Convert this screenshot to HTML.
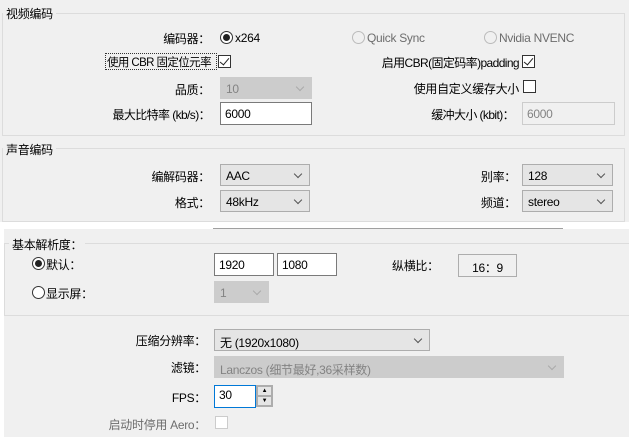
<!DOCTYPE html>
<html><head><meta charset="utf-8"><style>
*{margin:0;padding:0;box-sizing:border-box}
body{width:629px;height:448px;background:#fff;font-family:"Liberation Sans","Noto Sans CJK SC",sans-serif;font-size:12px;letter-spacing:-0.3px;color:#000;position:relative;overflow:hidden}
.a{position:absolute;white-space:nowrap}
.bg{position:absolute;background:#f0f0f0}
.grp{position:absolute;border:1px solid #dcdcdc}
.t{background:#f0f0f0;padding:0 3px}
.r{text-align:right}
.sel{position:absolute;border:1px solid #adadad;background:#e5e5e5;padding:4px 0 0 5px;height:22px}
.sel.d{border-color:#ccc;background:#cccccc;color:#838383}
.sel:after{content:"";position:absolute;right:8px;top:6px;width:5px;height:5px;border-right:1px solid #555;border-bottom:1px solid #555;transform:rotate(45deg)}
.sel.d:after{border-color:#aaa}
.inp{position:absolute;border:1px solid #7a7a7a;background:#fff;padding:4px 0 0 4px;height:23px}
.inp.d{border-color:#ccc;background:#f0f0f0;color:#838383}
.rad{position:absolute;width:13px;height:13px;border:1px solid #333;border-radius:50%;background:#fff}
.rad.on:after{content:"";position:absolute;left:2px;top:2px;width:7px;height:7px;border-radius:50%;background:#222}
.rad.d{border-color:#bbb;background:#f0f0f0}
.chk{position:absolute;width:13px;height:13px;border:1px solid #333;background:#fff}
.chk.on:after{content:"";position:absolute;left:3px;top:0px;width:4px;height:8px;border-right:1.5px solid #222;border-bottom:1.5px solid #222;transform:rotate(40deg)}
.chk.d{border-color:#ccc}
.g{color:#6d6d6d}
</style></head><body>
<div class="bg" style="left:0;top:0;width:629px;height:222px"></div>
<div class="bg" style="left:4px;top:229px;width:625px;height:208px"></div>

<div class="grp" style="left:2px;top:13px;width:623px;height:123px"></div>
<div class="a t" style="left:3px;top:5px">视频编码</div>
<div class="a r" style="left:100px;top:30px;width:110px">编码器：</div>
<div class="rad on" style="left:220px;top:31px"></div><div class="a" style="left:235px;top:31px">x264</div>
<div class="rad d" style="left:352px;top:31px"></div><div class="a g" style="left:367px;top:31px">Quick Sync</div>
<div class="rad d" style="left:484px;top:31px"></div><div class="a g" style="left:499px;top:31px">Nvidia NVENC</div>
<div class="a" style="left:105px;top:53px;width:112px;height:17px;border:1px dotted #333;padding:0 1px;font-size:11.5px;letter-spacing:-0.6px;overflow:hidden">使用 CBR 固定位元率</div>
<div class="chk on" style="left:218px;top:55px"></div>
<div class="a r" style="left:300px;top:54px;width:219px;letter-spacing:-0.6px">启用CBR(固定码率)padding</div>
<div class="chk on" style="left:522px;top:55px"></div>
<div class="a r" style="left:100px;top:81px;width:110px">品质：</div>
<div class="sel d" style="left:220px;top:77px;width:92px">10</div>
<div class="a r" style="left:300px;top:80px;width:219px">使用自定义缓存大小</div>
<div class="chk" style="left:523px;top:80px"></div>
<div class="a r" style="left:60px;top:106px;width:150px;letter-spacing:-0.6px">最大比特率 (kb/s)：</div>
<div class="inp" style="left:220px;top:102px;width:92px">6000</div>
<div class="a r" style="left:350px;top:106px;width:164px;letter-spacing:-0.6px">缓冲大小 (kbit)：</div>
<div class="inp d" style="left:522px;top:102px;width:93px">6000</div>

<div class="grp" style="left:2px;top:148px;width:623px;height:74px"></div>
<div class="a t" style="left:3px;top:141px">声音编码</div>
<div class="a r" style="left:100px;top:168px;width:110px">编解码器：</div>
<div class="sel" style="left:220px;top:164px;width:90px">AAC</div>
<div class="a r" style="left:400px;top:168px;width:116px">别率：</div>
<div class="sel" style="left:522px;top:164px;width:91px">128</div>
<div class="a r" style="left:100px;top:194px;width:110px">格式：</div>
<div class="sel" style="left:220px;top:190px;width:90px">48kHz</div>
<div class="a r" style="left:400px;top:194px;width:116px">频道：</div>
<div class="sel" style="left:522px;top:190px;width:91px">stereo</div>

<div class="a" style="left:213px;top:228px;width:350px;height:1px;background:#a0a0a0"></div>

<div class="grp" style="left:4px;top:243px;width:630px;height:73px"></div>
<div class="a t" style="left:9px;top:236px">基本解析度：</div>
<div class="rad on" style="left:32px;top:257px"></div><div class="a" style="left:46px;top:256px">默认：</div>
<div class="inp" style="left:214px;top:253px;width:60px">1920</div>
<div class="inp" style="left:277px;top:253px;width:60px">1080</div>
<div class="a" style="left:392px;top:257px">纵横比：</div>
<div class="a" style="left:458px;top:254px;width:59px;height:23px;border:1px solid #adadad;text-align:center;padding-top:4px">16：9</div>
<div class="rad" style="left:32px;top:286px"></div><div class="a" style="left:46px;top:285px">显示屏：</div>
<div class="sel d" style="left:214px;top:281px;width:55px">1</div>

<div class="a r" style="left:60px;top:332px;width:146px">压缩分辨率：</div>
<div class="sel" style="left:214px;top:329px;width:216px">无 (1920x1080)</div>
<div class="a r" style="left:60px;top:359px;width:146px">滤镜：</div>
<div class="sel d" style="left:214px;top:356px;width:350px">Lanczos (细节最好,36采样数)</div>
<div class="a r" style="left:60px;top:389px;width:146px">FPS：</div>
<div class="inp" style="left:214px;top:385px;width:42px;border-color:#0078d7;padding-top:2px">30</div>
<div class="a" style="left:256px;top:385px;width:17px;height:22px;border:1px solid #adadad;background:#f0f0f0"></div>
<div class="a" style="left:257px;top:386px;width:15px;height:10px;border:1px solid #adadad;background:#e5e5e5;font-size:6px;text-align:center;line-height:8px">▲</div>
<div class="a" style="left:257px;top:396px;width:15px;height:10px;border:1px solid #adadad;background:#e5e5e5;font-size:6px;text-align:center;line-height:8px">▼</div>
<div class="a r g" style="left:60px;top:416px;width:146px">启动时停用 Aero：</div>
<div class="chk d" style="left:215px;top:416px"></div>
</body></html>
